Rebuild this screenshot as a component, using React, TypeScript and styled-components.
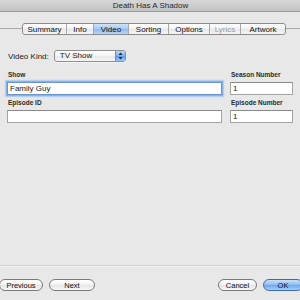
import React from "react"
import styled, { createGlobalStyle } from "styled-components"

const GlobalStyle = createGlobalStyle`
  html, body {
    margin: 0;
    padding: 0;
    background: #e8e8e8;
  }
  #root {
    width: 300px;
    height: 300px;
  }
`

const tabs = [
  { label: "Summary", width: 44 },
  { label: "Info", width: 27 },
  { label: "Video", width: 35, selected: true },
  { label: "Sorting", width: 40 },
  { label: "Options", width: 41 },
  { label: "Lyrics", width: 31, disabled: true },
  { label: "Artwork", width: 44 },
]

const App = () => {
  return (
    <Window>
      <GlobalStyle />
      <TitleBar>Death Has A Shadow</TitleBar>

      <TabStrip>
        <TabGroup>
          {tabs.map((t) => (
            <Tab
              key={t.label}
              $width={t.width}
              $selected={!!t.selected}
              $disabled={!!t.disabled}
            >
              {t.label}
            </Tab>
          ))}
        </TabGroup>
      </TabStrip>

      <Form>
        <KindRow>
          <KindLabel>Video Kind:</KindLabel>
          <Popup>
            <PopupText>TV Show</PopupText>
            <PopupArrows>
              <svg width="5" height="8" viewBox="0 0 5 8">
                <path d="M2.5 0.5 L4.5 3 L0.5 3 Z" fill="#1c2a40" />
                <path d="M2.5 7.5 L4.5 5 L0.5 5 Z" fill="#1c2a40" />
              </svg>
            </PopupArrows>
          </Popup>
        </KindRow>

        <FieldGrid>
          <Field>
            <FieldLabel>Show</FieldLabel>
            <TextBox $focused>Family Guy</TextBox>
          </Field>
          <Field>
            <FieldLabel>Season Number</FieldLabel>
            <TextBox>1</TextBox>
          </Field>
          <Field>
            <FieldLabel>Episode ID</FieldLabel>
            <TextBox />
          </Field>
          <Field>
            <FieldLabel>Episode Number</FieldLabel>
            <TextBox>1</TextBox>
          </Field>
        </FieldGrid>
      </Form>

      <Footer>
        <ButtonGroup>
          <PillButton $width={44} style={{ marginLeft: -1 }}>Previous</PillButton>
          <PillButton $width={46}>Next</PillButton>
        </ButtonGroup>
        <ButtonGroup>
          <PillButton $width={39}>Cancel</PillButton>
          <PillButton $width={40} $primary>OK</PillButton>
        </ButtonGroup>
      </Footer>
    </Window>
  )
}

export default App

const Window = styled.div`
  width: 300px;
  height: 300px;
  overflow: hidden;
  display: flex;
  flex-direction: column;
  background: #e8e8e8;
  font-family: "Liberation Sans", Arial, sans-serif;
  color: #1a1a1a;
`

const TitleBar = styled.div`
  height: 11px;
  line-height: 11px;
  text-align: center;
  font-size: 8px;
  color: #2a2a2a;
  background: linear-gradient(#d6d6d6, #c4c4c4);
  border-bottom: 1px solid #9a9a9a;
  padding-left: 1px;
`

const TabStrip = styled.div`
  position: relative;
  margin-top: 11px;
  height: 12px;
  padding-left: 22px;
  display: flex;

  &::before {
    content: "";
    position: absolute;
    left: 0;
    right: 0;
    top: 5px;
    border-top: 1px solid #a9a9a9;
  }
`

const TabGroup = styled.div`
  position: relative;
  display: flex;
  height: 12px;
  border: 1px solid #8c8c8c;
  border-radius: 3px;
  overflow: hidden;
  box-sizing: border-box;
  background: linear-gradient(#ffffff, #f2f2f2 50%, #e6e6e6 51%, #f6f6f6);
`

const Tab = styled.div<{ $width: number; $selected: boolean; $disabled: boolean }>`
  width: ${(p) => p.$width}px;
  display: flex;
  align-items: center;
  justify-content: center;
  font-size: 8px;
  color: ${(p) => (p.$disabled ? "#9c9c9c" : "#111")};
  border-right: 1px solid #a8a8a8;
  background: ${(p) =>
    p.$selected
      ? "linear-gradient(#cfe2fa, #a9c9f1 50%, #8db8ee 51%, #b7d6f8)"
      : "transparent"};
  box-sizing: border-box;

  &:last-child {
    border-right: none;
  }
`

const Form = styled.div`
  padding: 15px 7px 0 7px;
  display: flex;
  flex-direction: column;
`

const KindRow = styled.div`
  display: flex;
  align-items: center;
  gap: 5px;
  height: 12px;
`

const KindLabel = styled.span`
  font-size: 8px;
  padding-left: 1px;
`

const Popup = styled.div`
  width: 72px;
  height: 12px;
  box-sizing: border-box;
  display: flex;
  border: 1px solid #8e8e8e;
  border-radius: 3px;
  overflow: hidden;
  background: linear-gradient(#ffffff, #f3f3f3 50%, #e8e8e8 51%, #f7f7f7);
  box-shadow: 0 1px 0 rgba(255, 255, 255, 0.6);
`

const PopupText = styled.span`
  flex: 1;
  font-size: 8px;
  line-height: 10px;
  padding-left: 5px;
`

const PopupArrows = styled.span`
  width: 9px;
  display: flex;
  align-items: center;
  justify-content: center;
  background: linear-gradient(#b9d5f7, #7fb0ee 50%, #5e9be8 51%, #9cc6f6);
  border-left: 1px solid #6f8fb8;
`

const FieldGrid = styled.div`
  margin-top: 9px;
  display: grid;
  grid-template-columns: 215px 63px;
  column-gap: 8px;
  row-gap: 4px;
`

const Field = styled.div`
  display: flex;
  flex-direction: column;
  gap: 3px;
`

const FieldLabel = styled.span`
  font-size: 6.5px;
  font-weight: bold;
  color: #2a2a2a;
  line-height: 8px;
  padding-left: 1px;
`

const TextBox = styled.div<{ $focused?: boolean }>`
  height: 13px;
  box-sizing: border-box;
  background: #ffffff;
  border: 1px solid #a4a4a4;
  border-top-color: #8a8a8a;
  font-size: 8px;
  line-height: 11px;
  padding-left: 2px;
  box-shadow: ${(p) =>
    p.$focused ? "0 0 0 1px #8ab2e6, 0 0 1px 2px #b4cff0" : "none"};
  border-color: ${(p) => (p.$focused ? "#6c95cf" : undefined)};
`

const Footer = styled.div`
  margin-top: auto;
  height: 35px;
  border-top: 1px solid #d3d3d3;
  box-shadow: inset 0 1px 0 #f1f1f1;
  display: flex;
  justify-content: space-between;
  align-items: flex-start;
  padding-top: 13px;
  box-sizing: border-box;
  margin-right: -3px;
`

const ButtonGroup = styled.div`
  display: flex;
  gap: 6px;
`

const PillButton = styled.div<{ $width: number; $primary?: boolean }>`
  width: ${(p) => p.$width}px;
  height: 12px;
  box-sizing: border-box;
  border-radius: 6px;
  border: 1px solid ${(p) => (p.$primary ? "#3f6aa3" : "#7a7a7a")};
  background: ${(p) =>
    p.$primary
      ? "linear-gradient(#c7e0fb, #8dbdf2 50%, #6aa5ec 51%, #a6d0fa)"
      : "linear-gradient(#ffffff, #f2f2f2 50%, #e4e4e4 51%, #f8f8f8)"};
  display: flex;
  align-items: center;
  justify-content: center;
  font-size: 7.5px;
  color: #111;
`
